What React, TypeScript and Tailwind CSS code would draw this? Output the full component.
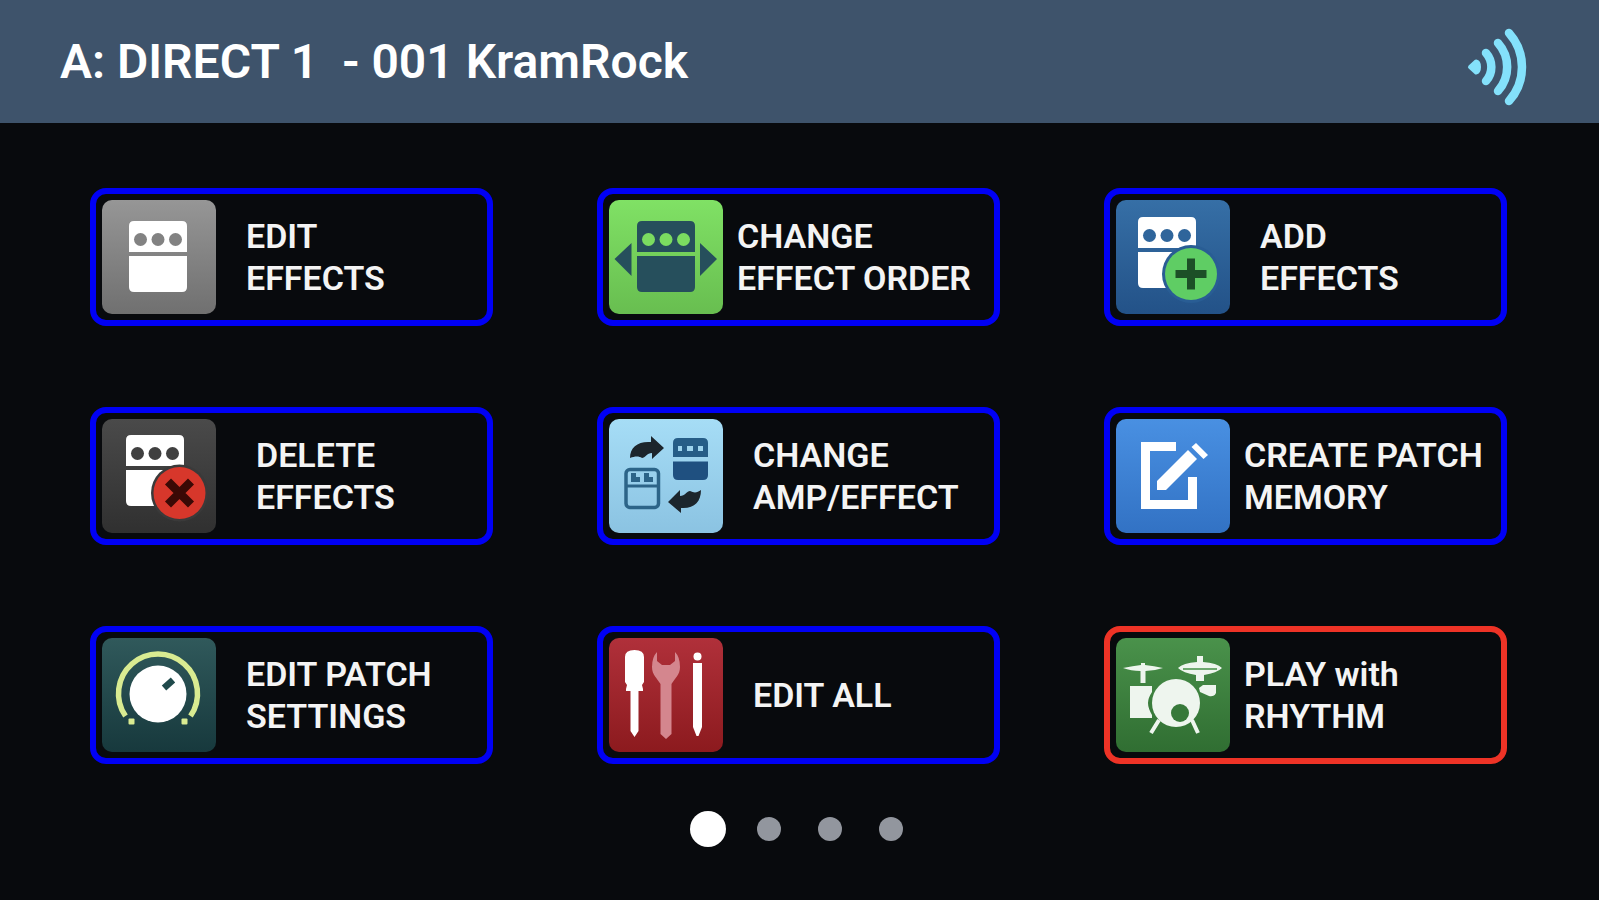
import { useState, type ReactNode } from "react";

type Action = {
  lines: string[];
  icon: ReactNode;
  tile: string;
  gap: string;
  border: string;
};

function Icon({ children }: { children: ReactNode }) {
  return (
    <svg viewBox="0 0 114 114" className="size-full" aria-hidden="true">
      {children}
    </svg>
  );
}

function Pedal({ x, y, fill, dot }: { x: number; y: number; fill: string; dot: string }) {
  return (
    <g transform={`translate(${x} ${y})`}>
      <path d="M5 0H53Q58 0 58 5V31H0V5Q0 0 5 0Z" fill={fill} />
      <path d="M0 35H58V66Q58 71 53 71H5Q0 71 0 66Z" fill={fill} />
      <circle cx="11.500" cy="18.500" r="6.500" fill={dot} />
      <circle cx="29" cy="18.500" r="6.500" fill={dot} />
      <circle cx="46.500" cy="18.500" r="6.500" fill={dot} />
    </g>
  );
}

const editIcon = (
  <Icon>
    <Pedal x={27} y={21} fill="#fff" dot="#828282" />
  </Icon>
);

const orderIcon = (
  <Icon>
    <Pedal x={28} y={21} fill="#264f5c" dot="#7bdc60" />
    <path d="M5.500 59 22.500 43V76ZM108 59 91 43V76Z" fill="#264f5c" />
  </Icon>
);

const addIcon = (
  <Icon>
    <Pedal x={22} y={17} fill="#fff" dot="#2f659b" />
    <circle cx="75" cy="74" r="29" fill="#295d94" />
    <circle cx="75" cy="74" r="26" fill="#5fcd64" />
    <path d="M75 58.500V89.500M59.500 74H90.500" stroke="#1c4f27" strokeWidth="8" />
  </Icon>
);

const deleteIcon = (
  <Icon>
    <Pedal x={24} y={16} fill="#fff" dot="#404040" />
    <circle cx="77.500" cy="74" r="28.500" fill="#3a3a3a" />
    <circle cx="77.500" cy="74" r="26" fill="#d7372b" />
    <path d="M66 62.500 89 85.500M89 62.500 66 85.500" stroke="#3a0905" strokeWidth="8.500" />
  </Icon>
);

const swapIcon = (
  <Icon>
    <path d="M21 39C21 28 29 22 42 23V17L55 29 43 40V34C38 34 36 39 33 39 30 37 26 37 21 39Z" fill="#1c252c" />
    <path d="M92 71C92 83 85 90 72 89V94L59 83 71 71V77C76 77 78 72 81 72 85 74 88 74 92 71Z" fill="#1c252c" />
    <path d="M69 19H94Q99 19 99 24V38H64V24Q64 19 69 19Z" fill="#265d87" />
    <path d="M64 42.500H99V56Q99 61 94 61H69Q64 61 64 56Z" fill="#1f5080" />
    <path d="M69 27H73V32H69ZM78 27H84V32H78ZM89 27H94V32H89Z" fill="#9ed4ee" />
    <rect x="17" y="50.500" width="32.500" height="38" rx="4" fill="none" stroke="#2c6488" strokeWidth="3.500" />
    <path d="M17 67H49.500" stroke="#2c6488" strokeWidth="3" />
    <path d="M22 54H27V58H31V63H22ZM35 54H40V58H44V63H35Z" fill="#2c6488" />
  </Icon>
);

const createIcon = (
  <Icon>
    <path d="M60 27.500H29.500V85.500H76.500V58" fill="none" stroke="#fff" strokeWidth="9" />
    <path d="M41 71V62L72 31 81 40 50 71Z" fill="#fff" />
    <path d="M75.500 28 80 24 92 36 87.500 40Z" fill="#fff" />
  </Icon>
);

const knobIcon = (
  <Icon>
    <path d="M23.500 78A39.500 39.500 0 1 1 88.500 78" fill="none" stroke="#d9eb91" strokeWidth="5.500" />
    <rect x="26.500" y="80.500" width="6" height="6" rx="1" fill="#d9eb91" />
    <rect x="79.500" y="80.500" width="6" height="6" rx="1" fill="#d9eb91" />
    <circle cx="56" cy="56" r="28.500" fill="#fff" />
    <path d="M62 50 71 42" stroke="#204a4c" strokeWidth="6.500" />
  </Icon>
);

const toolsIcon = (
  <Icon>
    <path d="M16 19Q16 12 25.500 12T35 19V44L33 47 34 51V53H29.500V93L25.500 99 21.500 93V53H17V51L18 47 16 44Z" fill="#fff" />
    <path
      d="M48 14V23L53 27H61L66 23V14Q71 19 71 29C71 37 66 40 62.500 46V96L57 101 51.500 96V46C48 40 43 37 43 29Q43 19 48 14Z"
      fill="#d4868e"
    />
    <circle cx="88.500" cy="18.500" r="4" fill="#fff" />
    <path d="M84 25H93V89L89.500 98H87.500L84 89Z" fill="#fff" />
  </Icon>
);

const drumsIcon = (
  <Icon>
    <g fill="#eef5ee">
      <path d="M7 30Q17 28 25 27V25H29V27Q38 28 47 30 38 33 29.500 33V45H24.500V33Q15 33 7 30Z" />
      <path d="M14 48H36V54Q32 60 32 65T36 77V80H14Z" />
      <path d="M62 30Q67 25 81 24V18H87V24Q101 25 106 30 101 35 88 37V43H80V37Q67 35 62 30Z" />
      <path d="M83 50 87 47H100V55Q98 59 93 58L84 54Z" />
      <circle cx="60" cy="65" r="24" />
    </g>
    <path d="M67 31H101" stroke="#6fa970" strokeWidth="2" />
    <path d="M43 82 35 95M76 82 82 95" stroke="#eef5ee" strokeWidth="4" />
    <circle cx="64" cy="75" r="9" fill="#37793a" />
  </Icon>
);

const BLUE = "border-[#0000f5]";
const RED = "border-[#ee3326]";

const NARROW = "gap-[14px]";
const MEDIUM = "gap-[30px]";
const WIDE = "gap-10";

const actions: Action[] = [
  { lines: ["EDIT", "EFFECTS"], icon: editIcon, tile: "from-[#969696] to-[#707070]", gap: MEDIUM, border: BLUE },
  { lines: ["CHANGE", "EFFECT ORDER"], icon: orderIcon, tile: "from-[#80e165] to-[#68be50]", gap: NARROW, border: BLUE },
  { lines: ["ADD", "EFFECTS"], icon: addIcon, tile: "from-[#366fa6] to-[#235288]", gap: MEDIUM, border: BLUE },
  { lines: ["DELETE", "EFFECTS"], icon: deleteIcon, tile: "from-[#4a4a4a] to-[#303030]", gap: WIDE, border: BLUE },
  { lines: ["CHANGE", "AMP/EFFECT"], icon: swapIcon, tile: "from-[#a6ddf6] to-[#8bc3e2]", gap: MEDIUM, border: BLUE },
  { lines: ["CREATE PATCH", "MEMORY"], icon: createIcon, tile: "from-[#4990e2] to-[#3272c4]", gap: NARROW, border: BLUE },
  { lines: ["EDIT PATCH", "SETTINGS"], icon: knobIcon, tile: "from-[#30595b] to-[#17393d]", gap: MEDIUM, border: BLUE },
  { lines: ["EDIT ALL"], icon: toolsIcon, tile: "from-[#b0303a] to-[#8c1a1e]", gap: MEDIUM, border: BLUE },
  { lines: ["PLAY with", "RHYTHM"], icon: drumsIcon, tile: "from-[#4a924b] to-[#306e32]", gap: NARROW, border: RED },
];

function ActionButton({ action }: { action: Action }) {
  return (
    <button
      type="button"
      className={`flex items-center rounded-2xl border-6 p-1.5 text-left ${action.gap} ${action.border}`}
    >
      <span className={`size-[114px] shrink-0 overflow-hidden rounded-[10px] bg-linear-to-b ${action.tile}`}>
        {action.icon}
      </span>
      <span className="text-[34px] leading-[42px] font-semibold whitespace-nowrap text-[#f4f4f4]">
        {action.lines.map((line) => (
          <span key={line} className="block">
            {line}
          </span>
        ))}
      </span>
    </button>
  );
}

function SignalIcon() {
  return (
    <svg viewBox="26 8 64 88" className="h-[88px] w-16" role="img" aria-label="Wireless connected">
      <path d="M30 57 36 51.500Q39 52 39 57T36 62.500Z" fill="#84e1fb" stroke="#84e1fb" strokeWidth="4" strokeLinejoin="round" />
      <g fill="none" stroke="#84e1fb" strokeWidth="8.500" strokeLinecap="round">
        <path d="M46 43A21 21 0 0 1 46 71" />
        <path d="M58 33A36 36 0 0 1 58 81" />
        <path d="M69 23A51 51 0 0 1 69 91" />
      </g>
    </svg>
  );
}

export default function App() {
  const [page, setPage] = useState(0);

  return (
    <div className="flex min-h-screen flex-col bg-[#080a0d] font-['Roboto','Inter',sans-serif]">
      <header className="flex h-[123px] items-center justify-between bg-[#3e536b] pr-[69px] pl-[60px]">
        <h1 className="text-5xl font-semibold whitespace-pre text-white">
          {"A: DIRECT 1  - 001 KramRock"}
        </h1>
        <SignalIcon />
      </header>
      <main className="flex flex-col gap-[47px] pt-[65px]">
        <div className="grid grid-cols-3 gap-x-[104px] gap-y-[81px] pr-[92px] pl-[90px]">
          {actions.map((action) => (
            <ActionButton key={action.lines.join(" ")} action={action} />
          ))}
        </div>
        <nav aria-label="Pages" className="flex justify-center gap-[25px]">
          {[0, 1, 2, 3].map((n) => (
            <button
              key={n}
              type="button"
              aria-label={`Page ${n + 1}`}
              aria-current={page === n ? "page" : undefined}
              onClick={() => setPage(n)}
              className="flex size-9 items-center justify-center"
            >
              <span className={page === n ? "size-9 rounded-full bg-white" : "size-6 rounded-full bg-[#92969e]"} />
            </button>
          ))}
        </nav>
      </main>
    </div>
  );
}
